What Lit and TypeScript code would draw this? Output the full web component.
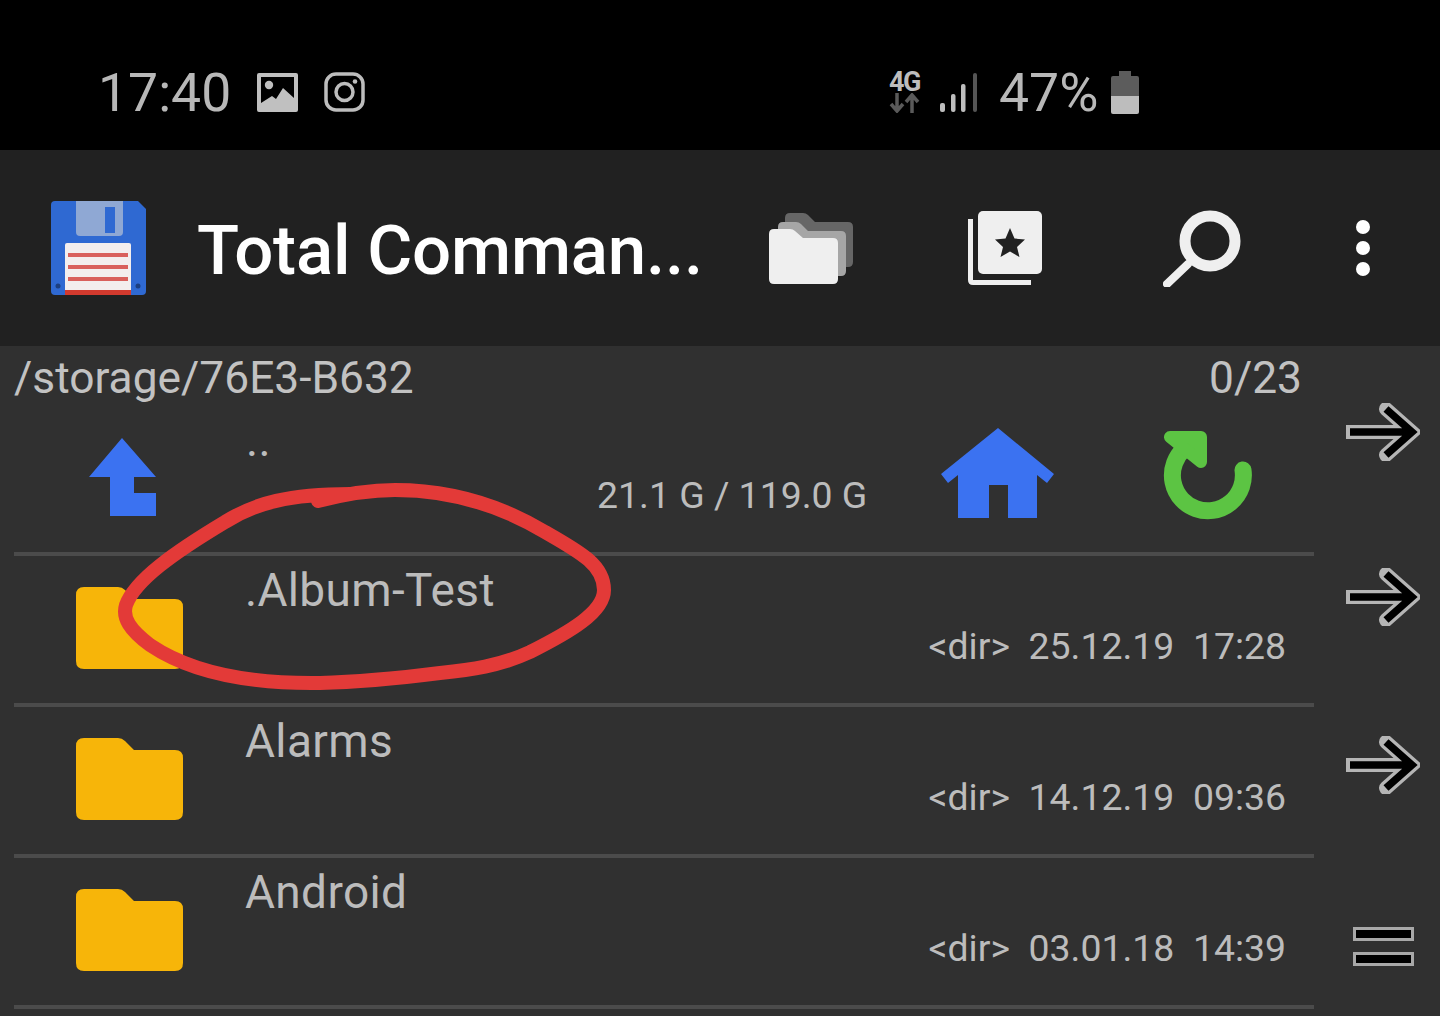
import { LitElement, html, css } from "lit";
import { customElement } from "lit/decorators.js";

const folder = html`<svg class="folder" viewBox="76 737 108 82" width="108" height="82">
  <path d="M84 737H118Q122 737 125 740L134 749H175Q183 749 183 757V811Q183 819 175 819H84Q76 819 76 811V745Q76 737 84 737Z" fill="#f7b509"/>
</svg>`;

const arrow = html`<svg class="arrow" viewBox="1346 403 74 58" width="74" height="58">
  <path d="M1347 432H1408M1386 409L1412 432L1386 455" fill="none" stroke="#b5b5b5" stroke-width="14" stroke-linecap="round"/>
  <path d="M1347 425H1352V439H1347Z" fill="#b5b5b5"/>
  <path d="M1350 432H1408M1386 409L1412 432L1386 455" fill="none" stroke="#000" stroke-width="7.500" stroke-linecap="butt"/>
</svg>`;

const rows = [
  { name: ".Album-Test", date: "25.12.19", time: "17:28" },
  { name: "Alarms", date: "14.12.19", time: "09:36" },
  { name: "Android", date: "03.01.18", time: "14:39" },
];

@customElement("app-root")
export class AppRoot extends LitElement {
  static styles = css`
    :host {
      display: block;
      position: relative;
      width: 1440px;
      height: 1016px;
      overflow: hidden;
      background: #303030;
      font-family: Roboto, "Liberation Sans", sans-serif;
      color: #bdbdbd;
    }
    svg { display: block; flex: none; }
    .status {
      height: 150px;
      background: #000;
      display: flex;
      align-items: center;
      padding: 34px 0 0 98px;
      box-sizing: border-box;
      color: #b8b8b8;
    }
    .clock, .pct { font-size: 53.500px; font-weight: 400; line-height: 60px; padding-top: 2px; white-space: nowrap; }
    .clock { width: 131px; }
    .img-ic { margin-left: 28px; }
    .ig-ic { margin-left: 26px; }
    .net { margin-left: 524px; width: 31px; display: flex; flex-direction: column; align-items: center; }
    .net-label { font-size: 27px; font-weight: 700; line-height: 22px; letter-spacing: -1.500px; color: #bdbdbd; }
    .signal { margin-left: 20px; }
    .pct { margin-left: 21px; width: 97px; }
    .batt { margin-left: 15px; }

    .toolbar {
      height: 196px;
      background: #212121;
      display: flex;
      align-items: center;
    }
    .logo { margin-left: 51px; }
    .title {
      margin-left: 51px;
      width: 503px;
      font-size: 69px;
      font-weight: 500;
      letter-spacing: -0.200px;
      color: #fff;
      white-space: nowrap;
      line-height: 80px;
      padding-top: 5px;
    }
    .tb-stack { margin-left: 69px; }
    .tb-book { margin-left: 113px; }
    .tb-search { margin-left: 121px; }
    .tb-dots { margin-left: 115px; }

    .list { display: flex; height: 670px; }
    .main { width: 1300px; margin-left: 14px; flex: none; }
    .path {
      height: 64px;
      display: flex;
      justify-content: space-between;
      font-size: 44.300px;
      line-height: 64px;
      padding-right: 12px;
      color: #c2c2c2;
    }
    .up {
      height: 142px;
      display: flex;
      align-items: flex-start;
      border-bottom: 4px solid #4b4b4b;
    }
    .up-ic { margin: 28px 0 0 75px; }
    .name { font-size: 46px; line-height: 56px; letter-spacing: 0.350px; color: #bcbcbc; }
    .up .name { width: 352px; margin: 2px 0 0 88px; padding-left: 1px; box-sizing: border-box; }
    .meta { font-size: 37.400px; line-height: 44px; color: #bcbcbc; white-space: pre; }
    .up .meta { width: 269px; margin-top: 63px; }
    .home { margin: 18px 0 0 75px; }
    .refresh { margin: 20px 0 0 109px; }

    .row {
      height: 147px;
      display: flex;
      border-bottom: 4px solid #4b4b4b;
    }
    .folder-cell { width: 231px; padding: 31px 0 0 62px; box-sizing: border-box; flex: none; }
    .body { flex: 1; padding-top: 6px; }
    .row .meta { margin-top: 6px; padding-right: 28px; text-align: right; }

    .side { flex: none; margin-left: 32px; padding-top: 57px; display: flex; flex-direction: column; }
    .side .a2 { margin-top: 107px; }
    .side .a3 { margin-top: 110px; }
    .side .eq { margin: 133px 0 0 7px; }

    .ink { position: absolute; left: 0; top: 0; pointer-events: none; }
  `;

  render() {
    return html`
      <div class="status">
        <span class="clock">17:40</span>
        <svg class="img-ic" viewBox="0 0 41 39" width="41" height="39">
          <path fill-rule="evenodd" d="M2 0H39Q41 0 41 2V37Q41 39 39 39H2Q0 39 0 37V2Q0 0 2 0ZM4 4V30L15 23L19 26L26 15L37 25V4Z" fill="#c0c0c0"/>
          <circle cx="12" cy="12" r="4.200" fill="#c0c0c0"/>
        </svg>
        <svg class="ig-ic" viewBox="0 0 41 40" width="41" height="40">
          <rect x="2" y="2" width="37" height="36" rx="10" fill="none" stroke="#bdbdbd" stroke-width="3.500"/>
          <circle cx="20.500" cy="20" r="8.500" fill="none" stroke="#bdbdbd" stroke-width="3.500"/>
          <circle cx="31" cy="9.500" r="2.300" fill="#bdbdbd"/>
        </svg>
        <div class="net">
          <span class="net-label">4G</span>
          <svg viewBox="0 0 31 20" width="31" height="20">
            <path d="M8 0V17M2 11L8 18L14 11" fill="none" stroke="#5a5a5a" stroke-width="3.500"/>
            <path d="M23 20V3M17 9L23 2L29 9" fill="none" stroke="#5a5a5a" stroke-width="3.500"/>
          </svg>
        </div>
        <svg class="signal" viewBox="0 0 38 39" width="38" height="39">
          <rect x="0" y="30" width="5" height="9" rx="2" fill="#bdbdbd"/>
          <rect x="11" y="21" width="4.500" height="18" rx="2" fill="#bdbdbd"/>
          <rect x="21" y="11" width="4.500" height="28" rx="2" fill="#bdbdbd"/>
          <rect x="33" y="0" width="4" height="39" rx="2" fill="#555"/>
        </svg>
        <span class="pct">47%</span>
        <svg class="batt" viewBox="0 0 28 43" width="28" height="43">
          <path d="M8 0H20V5H26Q28 5 28 7V25H0V7Q0 5 2 5H8Z" fill="#5c5c5c"/>
          <path d="M0 25H28V41Q28 43 26 43H2Q0 43 0 41Z" fill="#bdbdbd"/>
        </svg>
      </div>

      <div class="toolbar">
        <svg class="logo" viewBox="51 201 95 95" width="95" height="95">
          <path d="M55 201H138L146 209V291Q146 295 142 295H55Q51 295 51 291V205Q51 201 55 201Z" fill="#2f69d2"/>
          <path d="M76 201H123V232Q123 236 119 236H80Q76 236 76 232Z" fill="#8fa8d4"/>
          <rect x="105" y="207" width="10" height="26" fill="#2f69d2"/>
          <rect x="65" y="243" width="66" height="52" rx="2" fill="#f3eeee"/>
          <rect x="65" y="290" width="66" height="5" fill="#d23a2e"/>
          <rect x="68" y="253" width="60" height="4" fill="#d9605c"/>
          <rect x="68" y="265" width="60" height="4" fill="#d9605c"/>
          <rect x="68" y="277" width="60" height="4" fill="#d9605c"/>
          <circle cx="58" cy="286" r="2.500" fill="#1c3f80"/>
          <circle cx="138" cy="286" r="2.500" fill="#1c3f80"/>
        </svg>
        <div class="title">Total Comman...</div>
        <svg class="tb-stack" viewBox="769 213 85 71" width="85" height="71">
          <path d="M790 213H803Q806 213 808 215L815 222H848Q853 222 853 227V262Q853 267 848 267H790Q785 267 785 262V218Q785 213 790 213Z" fill="#666"/>
          <path d="M783 222H796Q799 222 801 224L808 231H841Q846 231 846 236V271Q846 276 841 276H783Q778 276 778 271V227Q778 222 783 222Z" fill="#a6a6a6"/>
          <path d="M774 229H790Q793 229 795 231L803 238H833Q838 238 838 243V279Q838 284 833 284H774Q769 284 769 279V234Q769 229 774 229Z" fill="#efefef"/>
        </svg>
        <svg class="tb-book" viewBox="967 211 75 76" width="75" height="76">
          <path d="M968 220H973V281H1031V286H973Q968 286 968 281Z" fill="#efefef"/>
          <rect x="978" y="212" width="64" height="63" rx="5" fill="#efefef"/>
          <path d="M1010 229L1014.500 239.500L1025 240.500L1017 248L1019.500 258L1010 252.500L1000.500 258L1003 248L995 240.500L1005.500 239.500Z" fill="#212121"/>
        </svg>
        <svg class="tb-search" viewBox="1163 208 78 77" width="78" height="77">
          <ellipse cx="1210" cy="239" rx="25" ry="25" fill="none" stroke="#efefef" stroke-width="11"/>
          <path d="M1188 262L1167 282" fill="none" stroke="#efefef" stroke-width="8" stroke-linecap="round"/>
        </svg>
        <svg class="tb-dots" viewBox="1356 220 14 56" width="14" height="56">
          <circle cx="1363" cy="227" r="7" fill="#fff"/>
          <circle cx="1363" cy="248" r="7" fill="#fff"/>
          <circle cx="1363" cy="269" r="7" fill="#fff"/>
        </svg>
      </div>

      <div class="list">
        <div class="main">
          <div class="path"><span>/storage/76E3-B632</span><span>0/23</span></div>
          <div class="up">
            <svg class="up-ic" viewBox="89 438 68 78" width="68" height="78">
              <path d="M122 438L156 477H134V493H156V516H110V477H89Z" fill="#3b72f1"/>
            </svg>
            <div class="name">..</div>
            <div class="meta">21.1 G / 119.0 G</div>
            <svg class="home" viewBox="941 428 113 91" width="113" height="91">
              <path d="M998 428L1054 474L1047 483L1037 475V518H1008V485H989V518H958V475L948 483L941 474Z" fill="#3b72f1"/>
            </svg>
            <svg class="refresh" viewBox="1163 430 89 90" width="89" height="90">
              <path d="M1243 470A35.500 35.500 0 1 1 1184 449" fill="none" stroke="#5cc443" stroke-width="17" stroke-linecap="round"/>
              <path d="M1170 437H1201V462Z" fill="#5cc443" stroke="#5cc443" stroke-width="12" stroke-linejoin="round"/>
            </svg>
          </div>
          ${rows.map(
            (r) => html`<div class="row">
              <div class="folder-cell">${folder}</div>
              <div class="body">
                <div class="name">${r.name}</div>
                <div class="meta">&lt;dir&gt;  ${r.date}  ${r.time}</div>
              </div>
            </div>`
          )}
        </div>
        <div class="side">
          ${arrow}
          <div class="a2">${arrow}</div>
          <div class="a3">${arrow}</div>
          <svg class="eq" viewBox="1354 928 61 40" width="61" height="40">
            <rect x="1355.500" y="929.500" width="58" height="11" fill="#000" stroke="#a8a8a8" stroke-width="3"/>
            <rect x="1355.500" y="954.500" width="58" height="11" fill="#000" stroke="#a8a8a8" stroke-width="3"/>
          </svg>
        </div>
      </div>

      <svg class="ink" viewBox="0 0 1440 1016" width="1440" height="1016">
        <path d="M318 501C345 494 370 490 395 490C450 490 500 505 545 532C580 552 604 565 604 590C604 612 570 632 530 652C500 666 470 670 440 673C400 678 360 682 320 683C250 684 190 672 150 645C130 630 122 618 126 605C135 580 175 552 225 522C255 503 290 494 350 494" fill="none" stroke="#e33a38" stroke-width="14" stroke-linecap="round"/>
      </svg>
    `;
  }
}
